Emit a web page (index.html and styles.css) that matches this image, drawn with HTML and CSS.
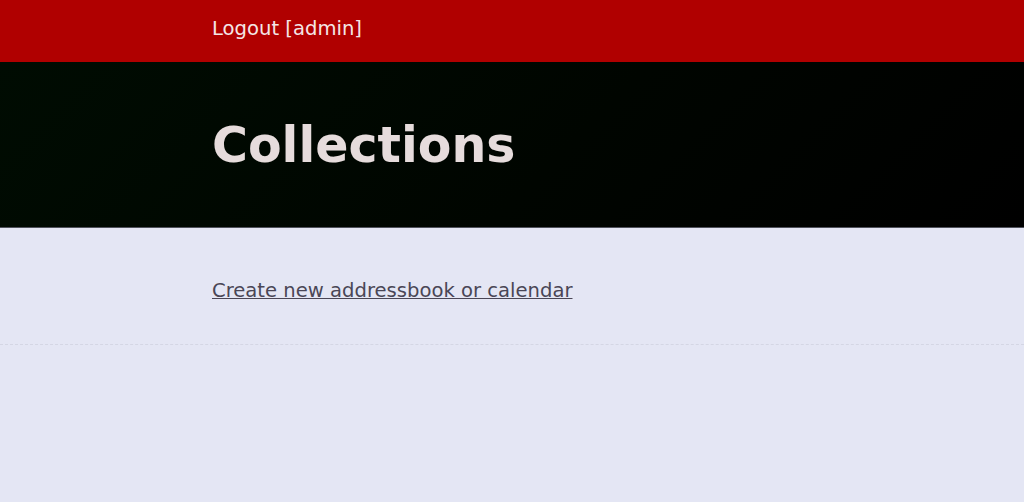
FILE: index.html
```html
<!DOCTYPE html>
<html lang="en">
<head>
    <meta charset="UTF-8">
    <meta name="viewport" content="width=device-width, initial-scale=1.0">
    <title>Collections</title>
    <link rel="stylesheet" href="styles.css">
</head>
<body>
    <nav class="topbar">
        <div class="wrap">
            <a href="#" class="logout">Logout [admin]</a>
        </div>
    </nav>

    <header class="banner">
        <div class="wrap">
            <h1>Collections</h1>
        </div>
    </header>

    <main class="content">
        <div class="wrap">
            <a href="#" class="create-link">Create new addressbook or calendar</a>
        </div>
    </main>
</body>
</html>
```

FILE: styles.css
```css
body {
    font-family: 'DejaVu Sans', Verdana, sans-serif;
    margin: 0;
    padding: 0;
    background-color: #e4e6f4;
    color: #333;
}

.wrap {
    width: 600px;
    margin: 0 auto;
}

.topbar {
    background-color: #b00000;
    height: 62px;
}

.logout {
    display: block;
    color: #f4e6e6;
    text-decoration: none;
    font-size: 19.6px;
    line-height: 57px;
}

.banner {
    background: linear-gradient(135deg, #000c02 0%, #000500 55%, #000000 100%);
    height: 165px;
    border-bottom: 1px solid #50525c;
}

.banner h1 {
    margin: 0;
    padding-top: 56px;
    font-size: 49px;
    line-height: 56px;
    color: #e6dcdc;
}

.content {
    padding: 51px 0 41px;
    border-bottom: 1px dashed #d4d6e4;
}

.create-link {
    color: #4a4656;
    font-size: 19.6px;
    line-height: 24px;
}
```
